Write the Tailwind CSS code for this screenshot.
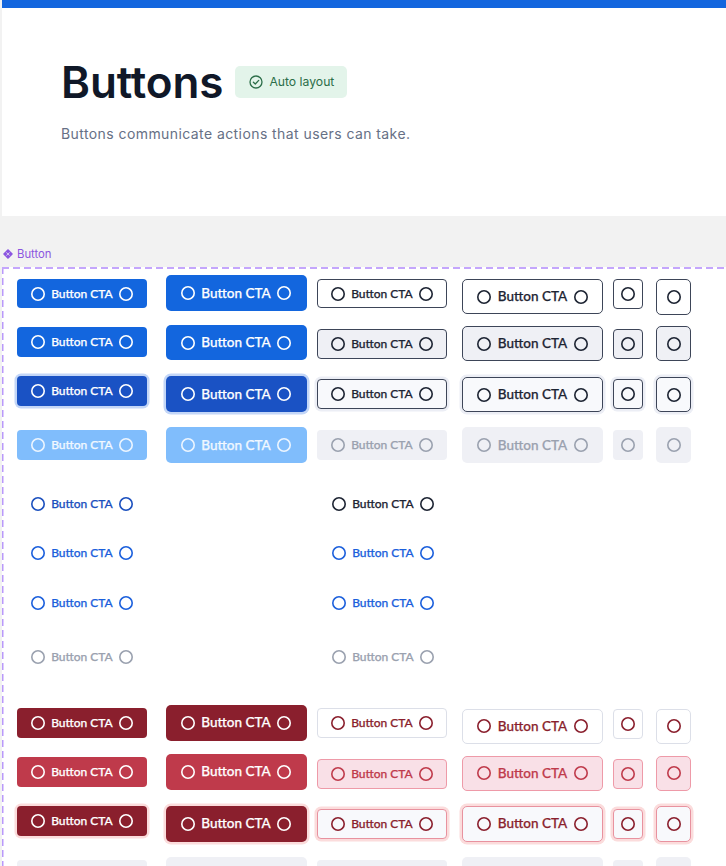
<!DOCTYPE html>
<html><head><meta charset="utf-8"><script src="https://cdn.jsdelivr.net/npm/@tailwindcss/browser@4"></script></head>
<body class="bg-white">
<div class="w-[726px] h-[866px] overflow-hidden bg-[#f2f2f2] font-['Inter',sans-serif]">
<!-- Header -->
<div class="ml-[2px] h-[216px] bg-white">
  <div class="h-[8px] bg-[#1366de]"></div>
  <div class="pl-[59px] pt-[58px]">
    <div class="flex items-center gap-[12px] h-[32px]">
      <h1 class="text-[44px] leading-[32px] font-semibold tracking-[-0.1px] text-[#101828]">Buttons</h1>
      <div class="flex items-center gap-[6px] w-[112px] h-[32px] pl-[14px] rounded-[5px] bg-[#e3f4ea] text-[12.2px] font-normal text-[#2c6e49]">
        <svg class="w-[14px] h-[14px]" viewBox="0 0 14 14" fill="none" stroke="#2c6e49" stroke-width="1.3"><circle cx="7" cy="7" r="6"/><path d="M4.4 7.2l1.9 1.8 3.4-3.6" stroke-linecap="round" stroke-linejoin="round"/></svg>
        <span>Auto layout</span>
      </div>
    </div>
    <p class="mt-[26px] text-[14px] leading-[20px] tracking-[0.42px] text-[#667085]">Buttons communicate actions that users can take.</p>
  </div>
</div>
<!-- Label -->
<div class="h-[51px] flex items-end pl-[3px] pb-[6px] gap-[4px] text-[#8b55e0] text-[11.3px] leading-[13px]">
  <svg class="w-[10px] h-[10px] mb-[2px]" viewBox="0 0 10 10" fill="#8b55e0"><path d="M5 0l2.6 2.6-2.6 2-2.6-2zM2.4 2.6l2.1 2.4-2.1 2.4-2.4-2.4zM7.6 2.6l2.4 2.4-2.4 2.4-2.1-2.4zM5 5.4l2.6 2-2.6 2.6-2.6-2.6z"/></svg>
  <span>Button</span>
</div>
<!-- Frame -->
<div class="ml-[2px] h-[599px] bg-white bg-[repeating-linear-gradient(180deg,#b999fa_0_7px,transparent_7px_11px)] bg-[length:1.5px_100%] bg-no-repeat rounded-tl-[3px] pl-[15px] font-['Lato',sans-serif] font-medium [-webkit-text-stroke:0.25px]">
<div class="-ml-[15px] h-[1.5px] mb-[2.5px] bg-[repeating-linear-gradient(90deg,#c4a6fc_0_7px,transparent_7px_11px)]"></div>

<!-- Primary row 1 -->
<div class="grid grid-cols-[148.5px_151.5px_145px_151px_43px_35px] items-start h-[49px]">
  <div class="mt-[8px] w-[130px] h-[29px] rounded-[4px] bg-[#1366de] text-white text-[12px] flex items-center justify-center gap-[6.5px]"><i class="w-[14px] h-[14px] rounded-full shadow-[inset_0_0_0_1.6px_currentColor]"></i><span>Button CTA</span><i class="w-[14px] h-[14px] rounded-full shadow-[inset_0_0_0_1.6px_currentColor]"></i></div>
  <div class="mt-[4px] w-[141px] h-[36px] rounded-[5px] bg-[#1366de] text-white text-[13.5px] flex items-center justify-center gap-[6.5px]"><i class="w-[14px] h-[14px] rounded-full shadow-[inset_0_0_0_1.6px_currentColor]"></i><span>Button CTA</span><i class="w-[14px] h-[14px] rounded-full shadow-[inset_0_0_0_1.6px_currentColor]"></i></div>
  <div class="mt-[8px] w-[130px] h-[29px] rounded-[4px] bg-white border border-[#3d4558] text-[#1d2433] text-[12px] flex items-center justify-center gap-[6.5px]"><i class="w-[14px] h-[14px] rounded-full shadow-[inset_0_0_0_1.6px_currentColor]"></i><span>Button CTA</span><i class="w-[14px] h-[14px] rounded-full shadow-[inset_0_0_0_1.6px_currentColor]"></i></div>
  <div class="mt-[8px] w-[141px] h-[35px] rounded-[5px] bg-white border border-[#3d4558] text-[#1d2433] text-[13.5px] flex items-center justify-center gap-[6.5px]"><i class="w-[14px] h-[14px] rounded-full shadow-[inset_0_0_0_1.6px_currentColor]"></i><span>Button CTA</span><i class="w-[14px] h-[14px] rounded-full shadow-[inset_0_0_0_1.6px_currentColor]"></i></div>
  <div class="mt-[8px] w-[30px] h-[30px] rounded-[4px] bg-white border border-[#3d4558] text-[#1d2433] flex items-center justify-center"><i class="w-[14px] h-[14px] rounded-full shadow-[inset_0_0_0_1.6px_currentColor]"></i></div>
  <div class="mt-[8px] w-[35px] h-[36px] rounded-[5px] bg-white border border-[#3d4558] text-[#1d2433] flex items-center justify-center"><i class="w-[14px] h-[14px] rounded-full shadow-[inset_0_0_0_1.6px_currentColor]"></i></div>
</div>
<!-- Primary row 2 -->
<div class="grid grid-cols-[148.5px_151.5px_145px_151px_43px_35px] items-start h-[49px]">
  <div class="mt-[7px] w-[130px] h-[30px] rounded-[4px] bg-[#1366de] text-white text-[12px] flex items-center justify-center gap-[6.5px]"><i class="w-[14px] h-[14px] rounded-full shadow-[inset_0_0_0_1.6px_currentColor]"></i><span>Button CTA</span><i class="w-[14px] h-[14px] rounded-full shadow-[inset_0_0_0_1.6px_currentColor]"></i></div>
  <div class="mt-[5px] w-[141px] h-[35px] rounded-[5px] bg-[#1366de] text-white text-[13.5px] flex items-center justify-center gap-[6.5px]"><i class="w-[14px] h-[14px] rounded-full shadow-[inset_0_0_0_1.6px_currentColor]"></i><span>Button CTA</span><i class="w-[14px] h-[14px] rounded-full shadow-[inset_0_0_0_1.6px_currentColor]"></i></div>
  <div class="mt-[9px] w-[130px] h-[30px] rounded-[4px] bg-[#eff0f5] border border-[#3d4558] text-[#1d2433] text-[12px] flex items-center justify-center gap-[6.5px]"><i class="w-[14px] h-[14px] rounded-full shadow-[inset_0_0_0_1.6px_currentColor]"></i><span>Button CTA</span><i class="w-[14px] h-[14px] rounded-full shadow-[inset_0_0_0_1.6px_currentColor]"></i></div>
  <div class="mt-[6px] w-[141px] h-[35px] rounded-[5px] bg-[#eff0f5] border border-[#3d4558] text-[#1d2433] text-[13.5px] flex items-center justify-center gap-[6.5px]"><i class="w-[14px] h-[14px] rounded-full shadow-[inset_0_0_0_1.6px_currentColor]"></i><span>Button CTA</span><i class="w-[14px] h-[14px] rounded-full shadow-[inset_0_0_0_1.6px_currentColor]"></i></div>
  <div class="mt-[9px] w-[30px] h-[30px] rounded-[4px] bg-[#eff0f5] border border-[#3d4558] text-[#1d2433] flex items-center justify-center"><i class="w-[14px] h-[14px] rounded-full shadow-[inset_0_0_0_1.6px_currentColor]"></i></div>
  <div class="mt-[6px] w-[35px] h-[35px] rounded-[5px] bg-[#eff0f5] border border-[#3d4558] text-[#1d2433] flex items-center justify-center"><i class="w-[14px] h-[14px] rounded-full shadow-[inset_0_0_0_1.6px_currentColor]"></i></div>
</div>
<!-- Primary row 3 -->
<div class="grid grid-cols-[148.5px_151.5px_145px_151px_43px_35px] items-start h-[51px]">
  <div class="mt-[7px] w-[130px] h-[30px] rounded-[4px] bg-[#1a52c4] ring-[2.5px] ring-[#c3d6f7] text-white text-[12px] flex items-center justify-center gap-[6.5px]"><i class="w-[14px] h-[14px] rounded-full shadow-[inset_0_0_0_1.6px_currentColor]"></i><span>Button CTA</span><i class="w-[14px] h-[14px] rounded-full shadow-[inset_0_0_0_1.6px_currentColor]"></i></div>
  <div class="mt-[7px] w-[141px] h-[36px] rounded-[5px] bg-[#1a52c4] ring-[2.5px] ring-[#c3d6f7] text-white text-[13.5px] flex items-center justify-center gap-[6.5px]"><i class="w-[14px] h-[14px] rounded-full shadow-[inset_0_0_0_1.6px_currentColor]"></i><span>Button CTA</span><i class="w-[14px] h-[14px] rounded-full shadow-[inset_0_0_0_1.6px_currentColor]"></i></div>
  <div class="mt-[10px] w-[130px] h-[30px] rounded-[4px] bg-[#f8f9fc] border border-[#3d4558] ring-[2.5px] ring-[#eceef5] text-[#1d2433] text-[12px] flex items-center justify-center gap-[6.5px]"><i class="w-[14px] h-[14px] rounded-full shadow-[inset_0_0_0_1.6px_currentColor]"></i><span>Button CTA</span><i class="w-[14px] h-[14px] rounded-full shadow-[inset_0_0_0_1.6px_currentColor]"></i></div>
  <div class="mt-[8px] w-[141px] h-[35px] rounded-[5px] bg-[#f8f9fc] border border-[#3d4558] ring-[2.5px] ring-[#eceef5] text-[#1d2433] text-[13.5px] flex items-center justify-center gap-[6.5px]"><i class="w-[14px] h-[14px] rounded-full shadow-[inset_0_0_0_1.6px_currentColor]"></i><span>Button CTA</span><i class="w-[14px] h-[14px] rounded-full shadow-[inset_0_0_0_1.6px_currentColor]"></i></div>
  <div class="mt-[10px] w-[30px] h-[30px] rounded-[4px] bg-[#f8f9fc] border border-[#3d4558] ring-[2.5px] ring-[#eceef5] text-[#1d2433] flex items-center justify-center"><i class="w-[14px] h-[14px] rounded-full shadow-[inset_0_0_0_1.6px_currentColor]"></i></div>
  <div class="mt-[8px] w-[35px] h-[35px] rounded-[5px] bg-[#f8f9fc] border border-[#3d4558] ring-[2.5px] ring-[#eceef5] text-[#1d2433] flex items-center justify-center"><i class="w-[14px] h-[14px] rounded-full shadow-[inset_0_0_0_1.6px_currentColor]"></i></div>
</div>
<!-- Primary row 4 -->
<div class="grid grid-cols-[148.5px_151.5px_145px_151px_43px_35px] items-start h-[54px]">
  <div class="mt-[10px] w-[130px] h-[30px] rounded-[4px] bg-[#80bdfc] text-white/85 text-[12px] flex items-center justify-center gap-[6.5px]"><i class="w-[14px] h-[14px] rounded-full shadow-[inset_0_0_0_1.6px_currentColor]"></i><span>Button CTA</span><i class="w-[14px] h-[14px] rounded-full shadow-[inset_0_0_0_1.6px_currentColor]"></i></div>
  <div class="mt-[7px] w-[141px] h-[36px] rounded-[5px] bg-[#80bdfc] text-white/85 text-[13.5px] flex items-center justify-center gap-[6.5px]"><i class="w-[14px] h-[14px] rounded-full shadow-[inset_0_0_0_1.6px_currentColor]"></i><span>Button CTA</span><i class="w-[14px] h-[14px] rounded-full shadow-[inset_0_0_0_1.6px_currentColor]"></i></div>
  <div class="mt-[10px] w-[130px] h-[30px] rounded-[4px] bg-[#eff0f5] text-[#9aa1af] text-[12px] flex items-center justify-center gap-[6.5px]"><i class="w-[14px] h-[14px] rounded-full shadow-[inset_0_0_0_1.6px_currentColor]"></i><span>Button CTA</span><i class="w-[14px] h-[14px] rounded-full shadow-[inset_0_0_0_1.6px_currentColor]"></i></div>
  <div class="mt-[7px] w-[141px] h-[36px] rounded-[5px] bg-[#eff0f5] text-[#9aa1af] text-[13.5px] flex items-center justify-center gap-[6.5px]"><i class="w-[14px] h-[14px] rounded-full shadow-[inset_0_0_0_1.6px_currentColor]"></i><span>Button CTA</span><i class="w-[14px] h-[14px] rounded-full shadow-[inset_0_0_0_1.6px_currentColor]"></i></div>
  <div class="mt-[10px] w-[30px] h-[30px] rounded-[4px] bg-[#eff0f5] text-[#9aa1af] flex items-center justify-center"><i class="w-[14px] h-[14px] rounded-full shadow-[inset_0_0_0_1.6px_currentColor]"></i></div>
  <div class="mt-[7px] w-[35px] h-[36px] rounded-[5px] bg-[#eff0f5] text-[#9aa1af] flex items-center justify-center"><i class="w-[14px] h-[14px] rounded-full shadow-[inset_0_0_0_1.6px_currentColor]"></i></div>
</div>

<!-- Ghost rows -->
<div class="grid grid-cols-[300px_145px] items-center h-[49.5px] text-[12px] mt-[5px]">
  <div class="w-[130px] text-[#1a4fbe] flex items-center justify-center gap-[6.5px]"><i class="w-[14px] h-[14px] rounded-full shadow-[inset_0_0_0_1.6px_currentColor]"></i><span>Button CTA</span><i class="w-[14px] h-[14px] rounded-full shadow-[inset_0_0_0_1.6px_currentColor]"></i></div>
  <div class="w-[132px] text-[#1d2433] flex items-center justify-center gap-[6.5px]"><i class="w-[14px] h-[14px] rounded-full shadow-[inset_0_0_0_1.6px_currentColor]"></i><span>Button CTA</span><i class="w-[14px] h-[14px] rounded-full shadow-[inset_0_0_0_1.6px_currentColor]"></i></div>
</div>
<div class="grid grid-cols-[300px_145px] items-center h-[49.5px] text-[12px]">
  <div class="w-[130px] text-[#1b5fdc] flex items-center justify-center gap-[6.5px]"><i class="w-[14px] h-[14px] rounded-full shadow-[inset_0_0_0_1.6px_currentColor]"></i><span>Button CTA</span><i class="w-[14px] h-[14px] rounded-full shadow-[inset_0_0_0_1.6px_currentColor]"></i></div>
  <div class="w-[132px] text-[#1b5fdc] flex items-center justify-center gap-[6.5px]"><i class="w-[14px] h-[14px] rounded-full shadow-[inset_0_0_0_1.6px_currentColor]"></i><span>Button CTA</span><i class="w-[14px] h-[14px] rounded-full shadow-[inset_0_0_0_1.6px_currentColor]"></i></div>
</div>
<div class="grid grid-cols-[300px_145px] items-center h-[49.5px] text-[12px]">
  <div class="w-[130px] text-[#1b5fdc] flex items-center justify-center gap-[6.5px]"><i class="w-[14px] h-[14px] rounded-full shadow-[inset_0_0_0_1.6px_currentColor]"></i><span>Button CTA</span><i class="w-[14px] h-[14px] rounded-full shadow-[inset_0_0_0_1.6px_currentColor]"></i></div>
  <div class="w-[132px] text-[#1b5fdc] flex items-center justify-center gap-[6.5px]"><i class="w-[14px] h-[14px] rounded-full shadow-[inset_0_0_0_1.6px_currentColor]"></i><span>Button CTA</span><i class="w-[14px] h-[14px] rounded-full shadow-[inset_0_0_0_1.6px_currentColor]"></i></div>
</div>
<div class="grid grid-cols-[300px_145px] items-center h-[49.5px] text-[12px] mt-[4.5px]">
  <div class="w-[130px] text-[#9aa1af] flex items-center justify-center gap-[6.5px]"><i class="w-[14px] h-[14px] rounded-full shadow-[inset_0_0_0_1.6px_currentColor]"></i><span>Button CTA</span><i class="w-[14px] h-[14px] rounded-full shadow-[inset_0_0_0_1.6px_currentColor]"></i></div>
  <div class="w-[132px] text-[#9aa1af] flex items-center justify-center gap-[6.5px]"><i class="w-[14px] h-[14px] rounded-full shadow-[inset_0_0_0_1.6px_currentColor]"></i><span>Button CTA</span><i class="w-[14px] h-[14px] rounded-full shadow-[inset_0_0_0_1.6px_currentColor]"></i></div>
</div>

<!-- Danger row 1 (starts y=704) -->
<div class="grid grid-cols-[148.5px_151.5px_145px_151px_43px_35px] items-start h-[49px] mt-[22px]">
  <div class="mt-[4px] w-[130px] h-[30px] rounded-[4px] bg-[#8a1f2d] text-white text-[12px] flex items-center justify-center gap-[6.5px]"><i class="w-[14px] h-[14px] rounded-full shadow-[inset_0_0_0_1.6px_currentColor]"></i><span>Button CTA</span><i class="w-[14px] h-[14px] rounded-full shadow-[inset_0_0_0_1.6px_currentColor]"></i></div>
  <div class="mt-[1px] w-[141px] h-[36px] rounded-[5px] bg-[#8a1f2d] text-white text-[13.5px] flex items-center justify-center gap-[6.5px]"><i class="w-[14px] h-[14px] rounded-full shadow-[inset_0_0_0_1.6px_currentColor]"></i><span>Button CTA</span><i class="w-[14px] h-[14px] rounded-full shadow-[inset_0_0_0_1.6px_currentColor]"></i></div>
  <div class="mt-[4px] w-[130px] h-[30px] rounded-[4px] bg-white border border-[#dcdfe8] text-[#8a1f2d] text-[12px] flex items-center justify-center gap-[6.5px]"><i class="w-[14px] h-[14px] rounded-full shadow-[inset_0_0_0_1.6px_currentColor]"></i><span>Button CTA</span><i class="w-[14px] h-[14px] rounded-full shadow-[inset_0_0_0_1.6px_currentColor]"></i></div>
  <div class="mt-[5px] w-[141px] h-[35px] rounded-[5px] bg-white border border-[#dcdfe8] text-[#8a1f2d] text-[13.5px] flex items-center justify-center gap-[6.5px]"><i class="w-[14px] h-[14px] rounded-full shadow-[inset_0_0_0_1.6px_currentColor]"></i><span>Button CTA</span><i class="w-[14px] h-[14px] rounded-full shadow-[inset_0_0_0_1.6px_currentColor]"></i></div>
  <div class="mt-[5px] w-[30px] h-[30px] rounded-[4px] bg-white border border-[#dcdfe8] text-[#8a1f2d] flex items-center justify-center"><i class="w-[14px] h-[14px] rounded-full shadow-[inset_0_0_0_1.6px_currentColor]"></i></div>
  <div class="mt-[5px] w-[35px] h-[35px] rounded-[5px] bg-white border border-[#dcdfe8] text-[#8a1f2d] flex items-center justify-center"><i class="w-[14px] h-[14px] rounded-full shadow-[inset_0_0_0_1.6px_currentColor]"></i></div>
</div>
<!-- Danger row 2 (y=753) -->
<div class="grid grid-cols-[148.5px_151.5px_145px_151px_43px_35px] items-start h-[49px]">
  <div class="mt-[4px] w-[130px] h-[30px] rounded-[4px] bg-[#bf3a4b] text-white text-[12px] flex items-center justify-center gap-[6.5px]"><i class="w-[14px] h-[14px] rounded-full shadow-[inset_0_0_0_1.6px_currentColor]"></i><span>Button CTA</span><i class="w-[14px] h-[14px] rounded-full shadow-[inset_0_0_0_1.6px_currentColor]"></i></div>
  <div class="mt-[1px] w-[141px] h-[36px] rounded-[5px] bg-[#bf3a4b] text-white text-[13.5px] flex items-center justify-center gap-[6.5px]"><i class="w-[14px] h-[14px] rounded-full shadow-[inset_0_0_0_1.6px_currentColor]"></i><span>Button CTA</span><i class="w-[14px] h-[14px] rounded-full shadow-[inset_0_0_0_1.6px_currentColor]"></i></div>
  <div class="mt-[6px] w-[130px] h-[30px] rounded-[4px] bg-[#f9e0e7] border border-[#ee9aa8] text-[#bf3a4b] text-[12px] flex items-center justify-center gap-[6.5px]"><i class="w-[14px] h-[14px] rounded-full shadow-[inset_0_0_0_1.6px_currentColor]"></i><span>Button CTA</span><i class="w-[14px] h-[14px] rounded-full shadow-[inset_0_0_0_1.6px_currentColor]"></i></div>
  <div class="mt-[3px] w-[141px] h-[35px] rounded-[5px] bg-[#f9e0e7] border border-[#ee9aa8] text-[#bf3a4b] text-[13.5px] flex items-center justify-center gap-[6.5px]"><i class="w-[14px] h-[14px] rounded-full shadow-[inset_0_0_0_1.6px_currentColor]"></i><span>Button CTA</span><i class="w-[14px] h-[14px] rounded-full shadow-[inset_0_0_0_1.6px_currentColor]"></i></div>
  <div class="mt-[6px] w-[30px] h-[30px] rounded-[4px] bg-[#f9e0e7] border border-[#ee9aa8] text-[#bf3a4b] flex items-center justify-center"><i class="w-[14px] h-[14px] rounded-full shadow-[inset_0_0_0_1.6px_currentColor]"></i></div>
  <div class="mt-[3px] w-[35px] h-[35px] rounded-[5px] bg-[#f9e0e7] border border-[#ee9aa8] text-[#bf3a4b] flex items-center justify-center"><i class="w-[14px] h-[14px] rounded-full shadow-[inset_0_0_0_1.6px_currentColor]"></i></div>
</div>
<!-- Danger row 3 (y=802) -->
<div class="grid grid-cols-[148.5px_151.5px_145px_151px_43px_35px] items-start h-[52px]">
  <div class="mt-[4px] w-[130px] h-[30px] rounded-[4px] bg-[#8a1f2d] ring-[2.5px] ring-[#fbdcdc] text-white text-[12px] flex items-center justify-center gap-[6.5px]"><i class="w-[14px] h-[14px] rounded-full shadow-[inset_0_0_0_1.6px_currentColor]"></i><span>Button CTA</span><i class="w-[14px] h-[14px] rounded-full shadow-[inset_0_0_0_1.6px_currentColor]"></i></div>
  <div class="mt-[4px] w-[141px] h-[36px] rounded-[5px] bg-[#8a1f2d] ring-[2.5px] ring-[#fbdcdc] text-white text-[13.5px] flex items-center justify-center gap-[6.5px]"><i class="w-[14px] h-[14px] rounded-full shadow-[inset_0_0_0_1.6px_currentColor]"></i><span>Button CTA</span><i class="w-[14px] h-[14px] rounded-full shadow-[inset_0_0_0_1.6px_currentColor]"></i></div>
  <div class="mt-[7px] w-[130px] h-[30px] rounded-[4px] bg-[#f8f9fc] border border-[#e8929f] ring-[2.5px] ring-[#fbdcdc] text-[#8a1f2d] text-[12px] flex items-center justify-center gap-[6.5px]"><i class="w-[14px] h-[14px] rounded-full shadow-[inset_0_0_0_1.6px_currentColor]"></i><span>Button CTA</span><i class="w-[14px] h-[14px] rounded-full shadow-[inset_0_0_0_1.6px_currentColor]"></i></div>
  <div class="mt-[4px] w-[141px] h-[36px] rounded-[5px] bg-[#f8f9fc] border border-[#e8929f] ring-[2.5px] ring-[#fbdcdc] text-[#8a1f2d] text-[13.5px] flex items-center justify-center gap-[6.5px]"><i class="w-[14px] h-[14px] rounded-full shadow-[inset_0_0_0_1.6px_currentColor]"></i><span>Button CTA</span><i class="w-[14px] h-[14px] rounded-full shadow-[inset_0_0_0_1.6px_currentColor]"></i></div>
  <div class="mt-[7px] w-[30px] h-[30px] rounded-[4px] bg-[#f8f9fc] border border-[#e8929f] ring-[2.5px] ring-[#fbdcdc] text-[#8a1f2d] flex items-center justify-center"><i class="w-[14px] h-[14px] rounded-full shadow-[inset_0_0_0_1.6px_currentColor]"></i></div>
  <div class="mt-[4px] w-[35px] h-[36px] rounded-[5px] bg-[#f8f9fc] border border-[#e8929f] ring-[2.5px] ring-[#fbdcdc] text-[#8a1f2d] flex items-center justify-center"><i class="w-[14px] h-[14px] rounded-full shadow-[inset_0_0_0_1.6px_currentColor]"></i></div>
</div>
<!-- Danger row 4 (y=854) -->
<div class="grid grid-cols-[148.5px_151.5px_145px_151px_43px_35px] items-start h-[50px]">
  <div class="mt-[6px] w-[130px] h-[30px] rounded-[4px] bg-[#eff0f5]"></div>
  <div class="mt-[3px] w-[141px] h-[36px] rounded-[5px] bg-[#eff0f5]"></div>
  <div class="mt-[6px] w-[130px] h-[30px] rounded-[4px] bg-[#eff0f5]"></div>
  <div class="mt-[3px] w-[141px] h-[36px] rounded-[5px] bg-[#eff0f5]"></div>
  <div class="mt-[6px] w-[30px] h-[30px] rounded-[4px] bg-[#eff0f5]"></div>
  <div class="mt-[3px] w-[35px] h-[36px] rounded-[5px] bg-[#eff0f5]"></div>
</div>
</div>
</div>
</body></html>
